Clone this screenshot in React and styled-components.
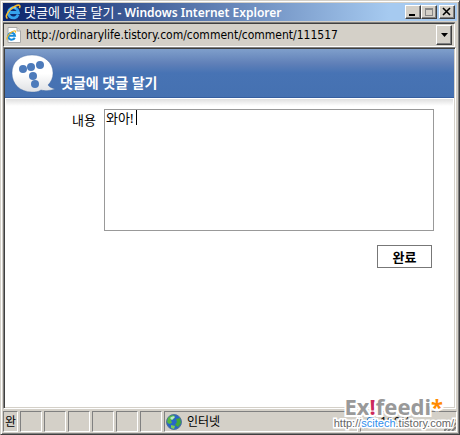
import React, { useState } from "react";
import styled, { createGlobalStyle } from "styled-components";

const GlobalStyle = createGlobalStyle`
  * {
    box-sizing: border-box;
  }

  body {
    margin: 0;
    background: #d4d0c8;
    font-family: "Noto Sans", "Noto Sans CJK KR", sans-serif;
    font-size: 12px;
    color: #000;
  }
`;

const Window = styled.div`
  position: relative;
  display: flex;
  flex-direction: column;
  min-height: 100vh;
  padding: 2px;
  border: 1px solid;
  border-color: #d4d0c8 #404040 #404040 #d4d0c8;
  box-shadow: inset 1px 1px #fff, inset -1px -1px #808080;
  overflow: hidden;
`;

const TitleBar = styled.header`
  display: flex;
  align-items: center;
  height: 18px;
  padding: 0 2px;
  background: linear-gradient(to right, #0a246a, #a6caf0 85%);
`;

const Title = styled.h1`
  flex: 1;
  margin: 0 0 0 3px;
  font-size: 12px;
  line-height: 18px;
  font-weight: 600;
  color: #fff;
  white-space: nowrap;
`;

const TitleKorean = styled.span`
  font-size: 13px;
  font-weight: 400;
`;

const WindowButton = styled.button`
  display: flex;
  width: 16px;
  height: 14px;
  margin-left: ${(props) => (props.$apart ? "2px" : "0")};
  padding: 0;
  border: 1px solid;
  border-color: #fff #404040 #404040 #fff;
  box-shadow: inset -1px -1px #808080;
  background: #d4d0c8;
`;

const AddressBar = styled.div`
  display: flex;
  align-items: center;
  height: 24px;
  margin: 2px 2px 0 0;
  padding: 0 2px;
  border: 1px solid;
  border-color: #404040 #fff #fff #404040;
  box-shadow: 0 -1px #808080;
`;

const AddressInput = styled.input`
  flex: 1;
  min-width: 0;
  margin-left: 4px;
  padding: 0;
  border: 0;
  outline: 0;
  background: transparent;
  font-family: "DejaVu Sans Condensed", "Noto Sans", sans-serif;
  font-size: 12px;
  color: #000;
`;

const DropButton = styled.button`
  display: flex;
  align-items: center;
  justify-content: center;
  width: 16px;
  height: 20px;
  padding: 0;
  border: 1px solid;
  border-color: #fff #404040 #404040 #fff;
  box-shadow: inset -1px -1px #808080;
  background: #d4d0c8;
`;

const Page = styled.main`
  flex: 1;
  margin-right: 1px;
  border: 1px solid;
  border-color: #808080 #fff #fff #808080;
  background: #fff;
  box-shadow: inset 1px 1px #404040, inset -1px -1px #d4d0c8;
  padding: 1px;
`;

const Banner = styled.div`
  display: flex;
  align-items: flex-end;
  height: 49px;
  padding: 0 6px 3px;
  border-bottom: 1px solid #355e9f;
  background: linear-gradient(#7f9fcb, #6080b8 30%, #4773b4 50%, #4571b1);
`;

const BannerTitle = styled.h2`
  margin: 0 0 3px 3px;
  font-size: 14px;
  line-height: 16px;
  font-weight: 700;
  color: #fff;
`;

const BannerShade = styled.div`
  height: 7px;
  margin: 1px 1px 0;
  background: linear-gradient(#dfdfdf, #fff);
`;

const Form = styled.form`
  display: flex;
  flex-direction: column;
  align-items: flex-end;
  gap: 14px;
  padding: 3px 20px 0 12px;
  font-size: 13px;
`;

const Field = styled.div`
  display: flex;
  align-self: stretch;
`;

const Label = styled.label`
  width: 87px;
  padding: 3px 8px 0 0;
  line-height: 16px;
  text-align: right;
`;

const TextBox = styled.div`
  position: relative;
  flex: 1;
  height: 122px;
`;

const TextArea = styled.textarea`
  display: block;
  width: 100%;
  height: 100%;
  padding: 0 1px;
  border: 1px solid #999;
  outline: 0;
  resize: none;
  font: inherit;
  line-height: 16px;
`;

const Caret = styled.span`
  position: absolute;
  top: 1px;
  left: 32px;
  width: 1px;
  height: 15px;
  background: #000;
`;

const SubmitButton = styled.button`
  width: 55px;
  height: 23px;
  margin-right: 2px;
  padding: 0;
  border: 1px solid #777;
  background: #fff;
  font: inherit;
  font-weight: 700;
  color: #000;
`;

const StatusBar = styled.footer`
  display: flex;
  gap: 2px;
  height: 21px;
  margin-top: 2px;
`;

const StatusCell = styled.div`
  display: flex;
  align-items: center;
  flex: ${(props) => (props.$grow ? "1" : "none")};
  width: ${(props) => props.$width || "22px"};
  padding-left: 1px;
  border: 1px solid;
  border-color: #808080 #fff #fff #808080;
  line-height: 16px;
  overflow: hidden;
  white-space: nowrap;
`;

const Zone = styled.span`
  margin-left: 5px;
`;

const ZoomLevel = styled.span`
  margin-left: 2px;
`;

const Watermark = styled.div`
  position: absolute;
  right: 5px;
  bottom: 4px;
  display: flex;
  flex-direction: column;
  align-items: flex-end;
`;

const Brand = styled.div`
  margin-right: 11px;
  font-size: 22px;
  line-height: 20px;
  font-weight: 700;
  color: #999;
  -webkit-text-stroke: 4px #fff;
  paint-order: stroke fill;
`;

const Mark = styled.span`
  color: ${(props) => props.$color};
`;

const BrandLink = styled.a`
  font-family: "Liberation Sans", sans-serif;
  font-size: 11px;
  line-height: 14px;
  color: #666;
  text-decoration: none;
  -webkit-text-stroke: 3px #fff;
  paint-order: stroke fill;
`;

const ExplorerIcon = ({ size = 16 }) => (
  <svg width={size} height={size} viewBox="0 0 16 16" aria-hidden="true">
    <path
      d="M13.2 10.6A5.1 5.1 0 1 1 13.5 8.5H5"
      fill="none"
      stroke="#36a4ed"
      strokeWidth="2.8"
    />
    <path
      d="M4.5 5.5A5 5 0 0 1 11 4"
      fill="none"
      stroke="#a8e3ff"
      strokeWidth="1"
    />
    <path
      d="M2.5 14.5C-1 13 4 5 10 2.2C14 .3 16 1 14.4 4.2"
      fill="none"
      stroke="#f9bd2d"
      strokeWidth="1.6"
    />
  </svg>
);

const PageIcon = () => (
  <svg width="16" height="16" viewBox="0 0 16 16" aria-hidden="true">
    <path d="M2 .5H11L14.5 4V15.5H2Z" fill="#fff" stroke="#aaa" />
    <path d="M11 .5V4H14.5" fill="#ddd" stroke="#aaa" />
    <path
      d="M8.7 10.7A3.4 3.4 0 1 1 9 8.8H3"
      fill="none"
      stroke="#168bdb"
      strokeWidth="2"
    />
    <path
      d="M1.4 12.8C-.5 12 3 6 7 4.3C9.2 3.3 10.3 4 9.4 5.6"
      fill="none"
      stroke="#edb52c"
      strokeWidth="1.2"
    />
  </svg>
);

const BubbleLogo = () => (
  <svg width="46" height="40" viewBox="0 0 46 40" aria-hidden="true">
    <defs>
      <linearGradient id="bubble" x1="0" y1="0" x2="0" y2="1">
        <stop offset="0.5" stopColor="#fff" />
        <stop offset="1" stopColor="#dfe1e4" />
      </linearGradient>
    </defs>
    <path
      d="M21 1C33 1 42 8 42 19C42 24 40 28 37 31C38 33 41 34 44 35C39 37 33 37 30 36C27 38 24 38 21 38C9 38 1 30 1 19C1 8 9 1 21 1Z"
      fill="url(#bubble)"
      stroke="#3e669f"
      strokeOpacity="0.4"
    />
    <g fill="#4d7bbb">
      <circle cx="12" cy="15" r="4" />
      <circle cx="20" cy="13" r="4" />
      <circle cx="29" cy="11" r="4" />
      <circle cx="22" cy="22" r="4" />
      <circle cx="24" cy="30" r="4" />
    </g>
  </svg>
);

const GlobeIcon = () => (
  <svg width="16" height="16" viewBox="0 0 16 16" aria-hidden="true">
    <circle cx="8" cy="8" r="7.5" fill="#2865c8" stroke="#547499" />
    <path d="M2 4Q5 0 9 2L8 5L5 6L6 9L3 10L1 8Z" fill="#58b943" />
    <path d="M10 5L14 4L15 9L12 13L9 11L11 8Z" fill="#43a838" />
    <path d="M5 11L9 12L8 15L5 14Z" fill="#7ccb55" />
    <path d="M4 4Q7 1 9 3L6 6Z" fill="#d3f4f1" opacity="0.8" />
  </svg>
);

const ZoomIcon = () => (
  <svg width="16" height="16" viewBox="0 0 16 16" aria-hidden="true">
    <circle cx="9" cy="7" r="4" fill="#d8edff" stroke="#367bc5" />
    <path d="M6 10L2 14" stroke="#367bc5" strokeWidth="2" />
  </svg>
);

const GripIcon = styled.svg`
  position: absolute;
  right: 3px;
  bottom: 3px;
  fill: none;
  stroke: #808080;
  stroke-width: 2;
`;

const App = () => {
  const [address, setAddress] = useState(
    "http://ordinarylife.tistory.com/comment/comment/111517"
  );
  const [content, setContent] = useState("와아!");

  return (
    <>
      <GlobalStyle />
      <Window>
        <TitleBar>
          <ExplorerIcon />
          <Title>
            <TitleKorean>댓글에 댓글 달기</TitleKorean> - Windows Internet
            Explorer
          </Title>
          <WindowButton type="button" aria-label="Minimize">
            <svg width="14" height="12">
              <path d="M3 8H9V10H3Z" />
            </svg>
          </WindowButton>
          <WindowButton type="button" aria-label="Maximize">
            <svg width="14" height="12">
              <path
                d="M3 2.5H11M3.5 2V10M10.5 2V10M3 9.5H11M3 3.5H11"
                stroke="#888"
              />
            </svg>
          </WindowButton>
          <WindowButton type="button" aria-label="Close" $apart>
            <svg width="14" height="12">
              <path d="M3 2L10 9M10 2L3 9" stroke="#000" strokeWidth="1.6" />
            </svg>
          </WindowButton>
        </TitleBar>
        <AddressBar>
          <PageIcon />
          <AddressInput
            aria-label="Address"
            value={address}
            onChange={(e) => setAddress(e.target.value)}
          />
          <DropButton type="button" aria-label="Show addresses">
            <svg width="7" height="4">
              <path d="M0 0H7L3.5 4Z" />
            </svg>
          </DropButton>
        </AddressBar>
        <Page>
          <Banner>
            <BubbleLogo />
            <BannerTitle>댓글에 댓글 달기</BannerTitle>
          </Banner>
          <BannerShade />
          <Form onSubmit={(e) => e.preventDefault()}>
            <Field>
              <Label htmlFor="content">내용</Label>
              <TextBox>
                <TextArea
                  id="content"
                  value={content}
                  onChange={(e) => setContent(e.target.value)}
                />
                <Caret />
              </TextBox>
            </Field>
            <SubmitButton type="submit">완료</SubmitButton>
          </Form>
        </Page>
        <StatusBar>
          <StatusCell $width="15px">완</StatusCell>
          <StatusCell />
          <StatusCell />
          <StatusCell />
          <StatusCell />
          <StatusCell />
          <StatusCell />
          <StatusCell $grow>
            <GlobeIcon />
            <Zone>인터넷</Zone>
          </StatusCell>
          <StatusCell $width="97px">
            <ZoomIcon />
            <ZoomLevel>100%</ZoomLevel>
          </StatusCell>
        </StatusBar>
        <GripIcon width="12" height="12" aria-hidden="true">
          <path d="M0 12L12 0M4 12L12 4M8 12L12 8" />
        </GripIcon>
        <Watermark>
          <Brand>
            Ex<Mark $color="#cc2a5c">!</Mark>feedi
            <Mark $color="#ff8a00">*</Mark>
          </Brand>
          <BrandLink href="http://scitech.tistory.com/">
            http://<Mark $color="#2f8eed">scitech</Mark>.tistory.com/
          </BrandLink>
        </Watermark>
      </Window>
    </>
  );
};

export default App;
